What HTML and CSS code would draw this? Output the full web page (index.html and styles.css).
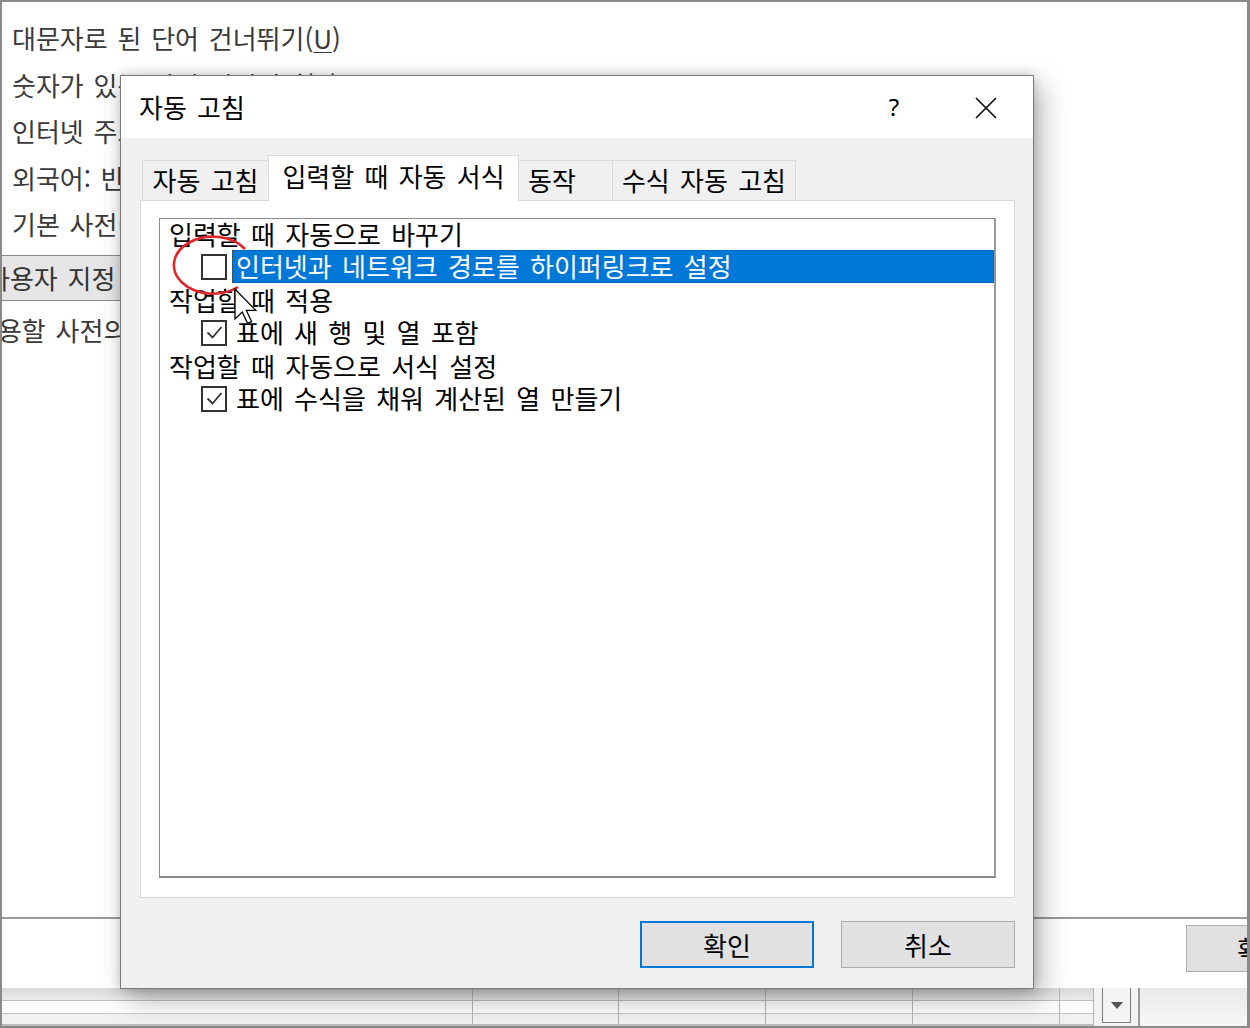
FILE: index.html
```html
<!DOCTYPE html>
<html lang="ko">
<head>
<meta charset="utf-8">
<title>자동 고침</title>
<link rel="stylesheet" href="styles.css">
</head>
<body>
<div class="screen">
  <div class="bg-top">
    <ul class="opts">
      <li>대문자로 된 단어 건너뛰기(<u>U</u>)</li>
      <li>숫자가 있는 단어 건너뛰기(<u>B</u>)</li>
      <li>인터넷 주소</li>
      <li>외국어: 반</li>
      <li>기본 사전(</li>
    </ul>
    <div class="band">사용자 지정</div>
    <div class="note">사용할 사전의</div>
  </div>
  <div class="bg-foot">
    <button class="bg-btn">확인</button>
  </div>
  <div class="strip">
    <div class="sheet">
      <div class="cell c1"></div>
      <div class="cell c2"></div>
      <div class="cell c2"></div>
      <div class="cell c2"></div>
      <div class="cell c2"></div>
      <div class="cell c3"></div>
    </div>
    <div class="dd"><span class="dd-arrow"></span></div>
    <div class="strip-rest"></div>
  </div>

  <div class="dialog">
    <div class="titlebar">
      <span class="title">자동 고침</span>
      <span class="help">?</span>
      <span class="close">
        <svg width="22" height="22" viewBox="0 0 22 22"><path d="M1 1 L21 21 M21 1 L1 21" stroke="#111" stroke-width="1.7" fill="none"/></svg>
      </span>
    </div>
    <div class="dbody">
      <div class="tabs">
        <div class="tab t1">자동 고침</div>
        <div class="tab active t2">입력할 때 자동 서식</div>
        <div class="tab t3">동작</div>
        <div class="tab t4">수식 자동 고침</div>
      </div>
      <div class="panel">
        <div class="listbox">
          <div class="row cat">입력할 때 자동으로 바꾸기</div>
          <div class="row item">
            <span class="cb"></span>
            <span class="lbl sel">인터넷과 네트워크 경로를 하이퍼링크로 설정</span>
          </div>
          <div class="row cat">작업할 때 적용</div>
          <div class="row item">
            <span class="cb"><svg width="21" height="21" viewBox="0 0 21 21"><path d="M3.5 10.5 L8.5 15.5 L17.5 5" stroke="#333" stroke-width="1.8" fill="none"/></svg></span>
            <span class="lbl">표에 새 행 및 열 포함</span>
          </div>
          <div class="row cat">작업할 때 자동으로 서식 설정</div>
          <div class="row item">
            <span class="cb"><svg width="21" height="21" viewBox="0 0 21 21"><path d="M3.5 10.5 L8.5 15.5 L17.5 5" stroke="#333" stroke-width="1.8" fill="none"/></svg></span>
            <span class="lbl">표에 수식을 채워 계산된 열 만들기</span>
          </div>
        </div>
      </div>
      <div class="buttons">
        <button class="btn default">확인</button>
        <button class="btn">취소</button>
      </div>
    </div>
    <svg class="annot" width="92" height="68" viewBox="0 0 92 68"><path d="M76 20 A39 28.5 0 1 0 69 58" stroke="#e3242b" stroke-width="2.6" fill="none"/></svg>
    <svg class="cursor" width="24" height="38" viewBox="0 0 24 38"><path d="M1 1 L1 31 L8.2 24 L13.6 35.4 L17.6 33.6 L12.4 22.4 L21.8 22.4 Z" fill="#fff" stroke="#000" stroke-width="1.3" stroke-linejoin="miter"/></svg>
  </div>
</div>
</body>
</html>
```

FILE: styles.css
```css
* { box-sizing: border-box; }
html, body { margin: 0; padding: 0; background: #fff; }
body { font-family: "Noto Sans CJK KR", "Noto Sans", sans-serif; }

.screen {
  position: relative;
  width: 1250px;
  height: 1028px;
  overflow: hidden;
  background: #fff;
  border: 2px solid #8a8a8a;
  border-right-width: 3px;
  display: flex;
  flex-direction: column;
}

/* background window */
.bg-top { flex: 1; min-height: 0; }
.opts { list-style: none; margin: 0; padding: 13px 0 0 10px; }
.opts li {
  height: 46.5px;
  line-height: 46.5px;
  font-size: 26px;
  word-spacing: 2.5px;
  color: #3a3a3a;
  white-space: nowrap;
}
.opts u { text-decoration-thickness: 1px; text-underline-offset: 3px; }
.band {
  margin-top: 7px;
  width: 140px;
  height: 46px;
  background: #e6e6e6;
  border-top: 1px solid #8a8a8a;
  border-bottom: 1px solid #8a8a8a;
  line-height: 44px;
  font-size: 26px;
  word-spacing: 2.5px;
  color: #333;
  white-space: nowrap;
  overflow: hidden;
  text-indent: -16px;
}
.note {
  margin-top: 6px;
  height: 46px;
  line-height: 46px;
  font-size: 26px;
  word-spacing: 2.5px;
  color: #3a3a3a;
  white-space: nowrap;
  text-indent: -28px;
}
.bg-foot {
  height: 71px;
  border-top: 2px solid #9a9a9a;
  display: flex;
  justify-content: flex-end;
  align-items: flex-start;
  padding-top: 6px;
}
.bg-btn {
  width: 150px;
  height: 47px;
  margin-right: -89px;
  background: #e1e1e1;
  border: 1px solid #adadad;
  font-family: inherit;
  font-size: 26px;
  line-height: 44px;
  color: #000;
  padding: 0;
}

/* bottom strip */
.strip {
  height: 38px;
  display: flex;
  background: #f3f3f3;
}
.sheet {
  width: 1092px;
  height: 38px;
  display: flex;
  background: linear-gradient(to bottom,
    #d9d9d9 0, #ebebeb 12px, #bcbcbc 12px, #bcbcbc 13px,
    #fdfdfd 13px, #fdfdfd 25px, #c6c6c6 25px, #c6c6c6 26px,
    #f1f1f1 26px, #f1f1f1 36px, #bdbdbd 36px);
}
.cell { height: 37px; border-right: 1px solid #b4b4b4; }
.c1 { width: 471px; }
.c2 { width: 147px; }
.c3 { width: 34px; }
.dd {
  width: 29px;
  height: 35px;
  margin-left: 8px;
  border: 1px solid #7c7c7c;
  border-top: none;
  background: #f4f4f4;
  display: flex;
  align-items: center;
  justify-content: center;
}
.dd-arrow {
  width: 0; height: 0;
  border-left: 6px solid transparent;
  border-right: 6px solid transparent;
  border-top: 7px solid #555;
}
.strip-rest {
  flex: 1;
  margin-left: 7px;
  border-left: 2px solid #9a9a9a;
  background: linear-gradient(to bottom, #e9e9e9, #f7f7f7);
}

/* dialog */
.dialog {
  position: absolute;
  left: 118px;
  top: 73px;
  width: 914px;
  height: 914px;
  border: 1px solid #7a7a7a;
  background: #f0f0f0;
  display: flex;
  flex-direction: column;
  box-shadow: 8px 10px 26px rgba(0,0,0,0.28), 0 0 10px rgba(0,0,0,0.18);
  color: #000;
  font-size: 26px;
  word-spacing: 3px;
}
.titlebar {
  height: 62px;
  background: #fff;
  display: flex;
  align-items: center;
  padding-left: 18px;
  line-height: 36px;
}
.help {
  margin-left: auto;
  width: 40px;
  text-align: center;
  font-family: "Noto Sans", sans-serif;
  font-size: 24px;
}
.close {
  width: 46px;
  margin-left: 49px;
  margin-right: 24px;
  display: flex;
  justify-content: center;
  padding-top: 2px;
}
.dbody {
  flex: 1;
  padding: 17px 18px 20px 19px;
  display: flex;
  flex-direction: column;
}
.tabs {
  height: 46px;
  margin-bottom: -1px;
  display: flex;
  align-items: flex-end;
  padding-left: 2px;
  position: relative;
  z-index: 1;
}
.tab {
  height: 41px;
  border: 1px solid #d9d9d9;
  background: #f0f0f0;
  line-height: 38px;
  text-align: center;
  white-space: nowrap;
  margin-right: -1px;
}
.tab.active {
  height: 46px;
  background: #fff;
  border-bottom: none;
  line-height: 40px;
}
.t1 { width: 127px; }
.t2 { width: 251px; }
.t3 { width: 95px; text-align: left; padding-left: 9px; }
.t4 { width: 184px; }

.panel {
  height: 698px;
  background: #fff;
  border: 1px solid #d9d9d9;
  padding: 17px 18px 19px 18px;
}
.listbox {
  height: 100%;
  border: 1px solid #8c8c8c;
  border-right: 2px solid #9a9a9a;
  border-bottom: 2px solid #868686;
}
.row {
  height: 33px;
  line-height: 32px;
  display: flex;
  align-items: center;
  white-space: nowrap;
}
.row:first-child { margin-top: -2px; }
.cat { padding-left: 9px; }
.item { padding-left: 41px; }
.cb {
  width: 26px;
  height: 26px;
  border: 2px solid #333;
  background: #fff;
  display: flex;
  align-items: center;
  justify-content: center;
  flex: none;
}
.lbl {
  margin-left: 5px;
  padding-left: 4px;
  height: 33px;
  line-height: 32px;
}
.lbl.sel {
  flex: 1;
  background: #0078d7;
  color: #fff;
  outline: 1px dotted #5a3a10;
  outline-offset: -1px;
}
.buttons {
  margin-top: 23px;
  display: flex;
  justify-content: flex-end;
  gap: 27px;
}
.btn {
  width: 174px;
  height: 47px;
  background: #e1e1e1;
  border: 1px solid #adadad;
  font-family: inherit;
  font-size: 26px;
  line-height: 42px;
  color: #000;
  padding: 0;
}
.btn.default { border: 2px solid #0078d7; }

.annot { position: absolute; left: 48px; top: 153px; }
.cursor { position: absolute; left: 113px; top: 212px; }
```
